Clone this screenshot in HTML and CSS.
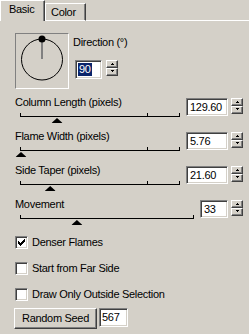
FILE: index.html
```html
<!DOCTYPE html>
<html lang="en">
<head>
    <meta charset="UTF-8">
    <title>Flame</title>
    <link rel="stylesheet" href="styles.css">
</head>
<body>

    <div class="tabs">
        <div class="tab active">Basic</div>
        <div class="tab inactive">Color</div>
        <div class="tab-rest"></div>
    </div>

    <div class="panel">
        <div class="dir-row">
            <div class="dial">
                <svg width="52" height="54" viewBox="0 0 52 54">
                    <circle cx="26" cy="25.5" r="20.5" fill="none" stroke="#000" stroke-width="1"/>
                    <line x1="26" y1="5" x2="26" y2="25" stroke="#808080" stroke-width="2"/>
                    <circle cx="26" cy="5" r="3.5" fill="#000"/>
                </svg>
            </div>
            <div class="dir-controls">
                <div class="label">Direction (°)</div>
                <div class="spin dir-spin">
                    <div class="field field-dir"><span class="sel">90</span></div>
                    <div class="spin-btns">
                        <div class="spin-btn"><span class="arrow up"></span></div>
                        <div class="spin-btn"><span class="arrow down"></span></div>
                    </div>
                </div>
            </div>
        </div>

        <div class="slider-group">
            <div class="slider-main">
                <div class="label">Column Length (pixels)</div>
                <div class="track">
                    <span class="tick" style="left: 80%"></span>
                    <span class="thumb" style="left: 22.8%"></span>
                </div>
            </div>
            <div class="spin">
                <div class="field field-wide">129.60</div>
                <div class="spin-btns">
                    <div class="spin-btn"><span class="arrow up"></span></div>
                    <div class="spin-btn"><span class="arrow down"></span></div>
                </div>
            </div>
        </div>

        <div class="slider-group">
            <div class="slider-main">
                <div class="label">Flame Width (pixels)</div>
                <div class="track">
                    <span class="tick" style="left: 80%"></span>
                    <span class="thumb" style="left: 0%"></span>
                </div>
            </div>
            <div class="spin">
                <div class="field field-wide">5.76</div>
                <div class="spin-btns">
                    <div class="spin-btn"><span class="arrow up"></span></div>
                    <div class="spin-btn"><span class="arrow down"></span></div>
                </div>
            </div>
        </div>

        <div class="slider-group">
            <div class="slider-main">
                <div class="label">Side Taper (pixels)</div>
                <div class="track">
                    <span class="tick" style="left: 80%"></span>
                    <span class="thumb" style="left: 18.5%"></span>
                </div>
            </div>
            <div class="spin">
                <div class="field field-wide">21.60</div>
                <div class="spin-btns">
                    <div class="spin-btn"><span class="arrow up"></span></div>
                    <div class="spin-btn"><span class="arrow down"></span></div>
                </div>
            </div>
        </div>

        <div class="slider-group">
            <div class="slider-main">
                <div class="label">Movement</div>
                <div class="track">
                    <span class="thumb" style="left: 32.5%"></span>
                </div>
            </div>
            <div class="spin">
                <div class="field field-small">33</div>
                <div class="spin-btns">
                    <div class="spin-btn"><span class="arrow up"></span></div>
                    <div class="spin-btn"><span class="arrow down"></span></div>
                </div>
            </div>
        </div>

        <div class="checks">
            <div class="check">
                <div class="box">
                    <svg width="7" height="7" viewBox="0 0 7 7" shape-rendering="crispEdges">
                        <rect x="0" y="2" width="1" height="3"/>
                        <rect x="1" y="3" width="1" height="3"/>
                        <rect x="2" y="4" width="1" height="3"/>
                        <rect x="3" y="3" width="1" height="3"/>
                        <rect x="4" y="2" width="1" height="3"/>
                        <rect x="5" y="1" width="1" height="3"/>
                        <rect x="6" y="0" width="1" height="3"/>
                    </svg>
                </div>
                <span>Denser Flames</span>
            </div>
            <div class="check">
                <div class="box"></div>
                <span>Start from Far Side</span>
            </div>
            <div class="check">
                <div class="box"></div>
                <span>Draw Only Outside Selection</span>
            </div>
        </div>

        <div class="seed-row">
            <button class="btn">Random Seed</button>
            <div class="field field-seed">567</div>
        </div>
    </div>

</body>
</html>
```

FILE: styles.css
```css
body {
    margin: 0;
    width: 249px;
    height: 334px;
    overflow: hidden;
    background: #d4d0c8;
    color: #000;
    font-family: "Liberation Sans", Arial, sans-serif;
    font-size: 11px;
    letter-spacing: -0.3px;
    line-height: 13px;
}

/* tabs */
.tabs {
    display: flex;
    height: 21px;
}

.tab {
    box-sizing: border-box;
    border-top: 1px solid #fff;
    border-left: 1px solid #fff;
    border-right: 1px solid #404040;
    box-shadow: inset -1px 0 #808080;
}

.tab.active {
    width: 45px;
    height: 21px;
    padding: 2px 0 0 8px;
}

.tab.inactive {
    width: 41px;
    height: 18px;
    margin-top: 3px;
    border-bottom: 1px solid #fff;
    padding: 2px 0 0 5px;
}

.tab-rest {
    flex: 1;
    border-bottom: 1px solid #fff;
}

.panel {
    padding: 12px 6px 0 15px;
}

/* direction */
.dir-row {
    display: flex;
}

.dial {
    box-sizing: border-box;
    width: 54px;
    height: 56px;
    border: 1px solid;
    border-color: #808080 #fff #fff #808080;
}

.dial svg {
    display: block;
}

.dir-controls {
    margin-left: 4px;
    padding-top: 3px;
}

.dir-spin {
    margin: 11px 0 0 2px;
}

/* spin boxes */
.spin {
    display: flex;
    align-items: flex-start;
}

.field {
    box-sizing: border-box;
    height: 18px;
    background: #fff;
    border: 1px solid;
    border-color: #808080 #fff #fff #808080;
    box-shadow: inset 1px 1px #404040, inset -1px -1px #d4d0c8;
    padding: 2px 0 0 3px;
    white-space: nowrap;
}

.field-dir {
    width: 27px;
    height: 19px;
    padding: 2px 0 0 2px;
}

.sel {
    background: #0a246a;
    color: #fff;
    display: inline-block;
    padding: 0 1px;
}

.field-wide {
    width: 42px;
}

.field-small {
    width: 28px;
}

.field-seed {
    width: 29px;
    height: 19px;
    padding-left: 2px;
}

.spin-btns {
    margin-left: 3px;
    display: flex;
    flex-direction: column;
}

.dir-spin .spin-btns {
    margin-left: 4px;
}

.spin-btn {
    box-sizing: border-box;
    width: 12px;
    height: 8px;
    border: 1px solid;
    border-color: #fff #404040 #404040 #fff;
    box-shadow: inset -1px -1px #808080;
    display: flex;
    justify-content: center;
    align-items: center;
}

.arrow {
    width: 1px;
    height: 1px;
    background: #000;
}

.arrow.up {
    margin-top: -2px;
    box-shadow: 0 1px #000, -1px 1px #000, 1px 1px #000;
}

.arrow.down {
    margin-top: -1px;
    box-shadow: 0 -1px #000, -1px -1px #000, 1px -1px #000;
}

/* sliders */
.slider-group {
    display: flex;
    height: 34px;
}

.dir-row + .slider-group {
    margin-top: 7px;
}

.slider-main {
    flex: 1;
}

.slider-group .spin {
    margin-top: 2px;
}

.track {
    position: relative;
    box-sizing: border-box;
    height: 4px;
    margin: 4px 6px 0 5px;
    border: 1px solid #000;
    border-top: none;
}

.tick {
    position: absolute;
    top: 0;
    width: 1px;
    height: 3px;
    background: #000;
}

.thumb {
    position: absolute;
    top: calc(100% + 2px);
    width: 11px;
    height: 5px;
    background: #000;
    transform: translateX(-50%);
    clip-path: polygon(50% 0, 100% 100%, 0 100%);
}

/* checkboxes */
.checks {
    margin-top: -3px;
}

.check {
    display: flex;
    align-items: center;
    height: 26px;
}

.box {
    box-sizing: border-box;
    width: 13px;
    height: 13px;
    margin-right: 4px;
    background: #fff;
    border: 1px solid;
    border-color: #808080 #fff #fff #808080;
    box-shadow: inset 1px 1px #404040, inset -1px -1px #d4d0c8;
    display: flex;
    align-items: center;
    justify-content: center;
}

/* seed */
.seed-row {
    display: flex;
    align-items: flex-start;
    margin: 1px 0 0 -1px;
}

.btn {
    box-sizing: border-box;
    width: 83px;
    height: 21px;
    margin-right: 2px;
    padding: 0;
    background: #d4d0c8;
    font: inherit;
    letter-spacing: inherit;
    color: #000;
    border: 1px solid;
    border-color: #fff #404040 #404040 #fff;
    box-shadow: inset -1px -1px #808080;
}
```
